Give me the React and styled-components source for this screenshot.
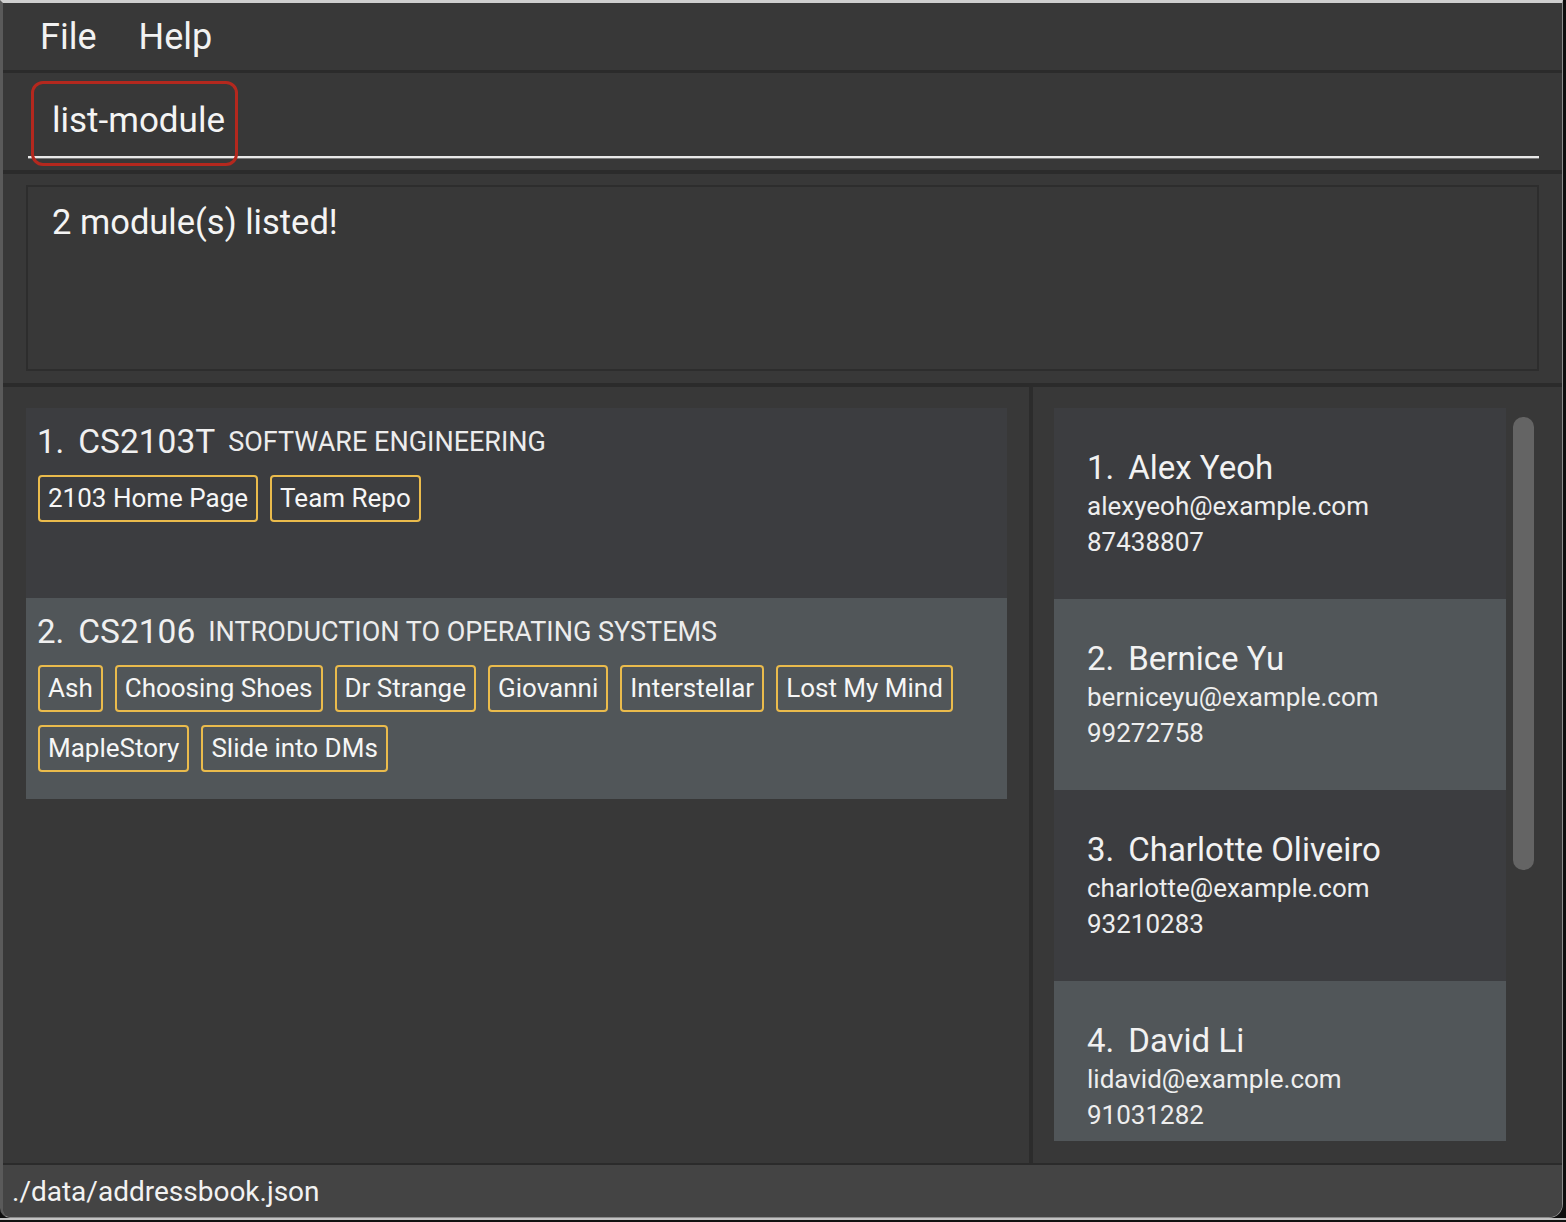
import React from "react";
import styled, { createGlobalStyle } from "styled-components";

const GlobalStyle = createGlobalStyle`
  html, body {
    margin: 0;
    padding: 0;
    background: #101010;
    overflow: hidden;
  }
  * { box-sizing: border-box; }
`;

const Frame = styled.div`
  width: 1566px;
  height: 1222px;
  background: #0e0e0e;
  font-family: Roboto, "Liberation Sans", sans-serif;
  color: #f0f0f0;
`;

const Window = styled.div`
  width: 1563px;
  height: 1218px;
  border-left: 3px solid #5a5a5a;
  border-top: 3px solid #cfcfcf;
  border-right: 1px solid #8c8c8c;
  border-bottom: 1px solid #8c8c8c;
  border-bottom-right-radius: 14px;
  border-bottom-left-radius: 10px;
  overflow: hidden;
  display: flex;
  flex-direction: column;
  background: #383838;
`;

const BottomEdge = styled.div`
  height: 4px;
  border-top: 2px solid #c2c2c2;
  background: #111;
`;

const Separator = styled.div`
  flex: 0 0 ${(p) => p.$h}px;
  background: #2b2b2b;
`;

const MenuBar = styled.div`
  flex: 0 0 67px;
  display: flex;
  align-items: center;
  padding-left: 16px;
  background: #383838;
`;

const MenuItem = styled.div`
  padding: 0 21px;
  font-size: 36px;
  color: #f2f2f2;
`;

const CommandBox = styled.div`
  position: relative;
  flex: 0 0 97px;
  display: flex;
  align-items: flex-end;
  padding: 0 23px 12px 25px;
  background: #383838;
`;

const CommandInput = styled.div`
  flex: 1;
  height: 72px;
  line-height: 70px;
  padding-left: 24px;
  font-size: 35px;
  color: #f4f4f4;
  border-bottom: 2px solid #e9e9e9;
  box-shadow: 0 1px 0 #7a7a7a;
`;

const Highlight = styled.div`
  position: absolute;
  left: 28px;
  top: 8px;
  width: 207px;
  height: 85px;
  border: 3px solid #b4281e;
  border-radius: 12px;
  pointer-events: none;
`;

const ResultSection = styled.div`
  flex: 0 0 209px;
  padding: 11px 23px 12px 23px;
  background: #383838;
  display: flex;
`;

const ResultBox = styled.div`
  flex: 1;
  border: 2px solid #2d2d2d;
  padding: 13px 24px;
  font-size: 34.5px;
  line-height: 44px;
  color: #f4f4f4;
`;

const Main = styled.div`
  flex: 0 0 776px;
  min-height: 0;
  overflow: hidden;
  display: flex;
  background: #383838;
`;

const ModulePanel = styled.div`
  flex: 0 0 1026px;
  min-height: 0;
  padding: 21px 22px 0 23px;
  display: flex;
  flex-direction: column;
`;

const VDivider = styled.div`
  flex: 0 0 4px;
  background: #2c2c2c;
`;

const PersonPanel = styled.div`
  flex: 1;
  min-height: 0;
  padding: 21px 21px 22px 21px;
  display: flex;
`;

const PersonViewport = styled.div`
  position: relative;
  flex: 1;
  min-height: 0;
  overflow: hidden;
  display: flex;
  align-items: flex-start;
`;

const PersonColumn = styled.div`
  flex: 0 0 452px;
  display: flex;
  flex-direction: column;
`;

const ScrollThumb = styled.div`
  position: absolute;
  left: 459px;
  top: 9px;
  width: 21px;
  height: 453px;
  border-radius: 10px;
  background: #646464;
`;

const Card = styled.div`
  background: ${(p) => (p.$alt ? "#515659" : "#3c3d40")};
`;

const ModuleCard = styled(Card)`
  min-height: 190px;
  padding: 14px 12px 27px 11px;
  display: flex;
  flex-direction: column;
  gap: 13px;
`;

const ModuleTitle = styled.div`
  display: flex;
  align-items: center;
  height: 40px;
  line-height: 40px;
`;

const Index = styled.span`
  font-size: 33px;
  color: #f0f0f0;
  margin-right: ${(p) => p.$gap}px;
`;

const ModuleCode = styled.span`
  font-size: 33.5px;
  color: #f0f0f0;
  margin-right: 13px;
`;

const ModuleName = styled.span`
  font-size: 27px;
  color: #ececec;
`;

const Tags = styled.div`
  display: flex;
  flex-wrap: wrap;
  gap: 13px 12px;
  padding-left: 1px;
`;

const Tag = styled.span`
  display: inline-block;
  height: 47px;
  line-height: 33px;
  padding: 5px 8px;
  font-size: 26px;
  color: #f6f6f6;
  border: 2px solid #eabb4c;
  border-radius: 4px;
`;

const PersonCard = styled(Card)`
  flex: 0 0 191px;
  display: flex;
  flex-direction: column;
  justify-content: center;
  padding-left: 33px;
`;

const PersonName = styled.div`
  font-size: 33px;
  line-height: 40px;
  color: #f2f2f2;
  display: flex;
`;

const PersonLine = styled.div`
  font-size: 26px;
  line-height: 36px;
  color: #eeeeee;
`;

const StatusBar = styled.div`
  flex: 0 0 52px;
  display: flex;
  align-items: center;
  padding-left: 9px;
  font-size: 28px;
  color: #f2f2f2;
  background: #444444;
`;

const modules = [
  {
    code: "CS2103T",
    name: "SOFTWARE ENGINEERING",
    tags: ["2103 Home Page", "Team Repo"],
  },
  {
    code: "CS2106",
    name: "INTRODUCTION TO OPERATING SYSTEMS",
    tags: [
      "Ash",
      "Choosing Shoes",
      "Dr Strange",
      "Giovanni",
      "Interstellar",
      "Lost My Mind",
      "MapleStory",
      "Slide into DMs",
    ],
  },
];

const persons = [
  { name: "Alex Yeoh", email: "alexyeoh@example.com", phone: "87438807" },
  { name: "Bernice Yu", email: "berniceyu@example.com", phone: "99272758" },
  { name: "Charlotte Oliveiro", email: "charlotte@example.com", phone: "93210283" },
  { name: "David Li", email: "lidavid@example.com", phone: "91031282" },
];

export default function App() {
  return (
    <Frame>
      <GlobalStyle />
      <Window>
        <MenuBar>
          <MenuItem>File</MenuItem>
          <MenuItem>Help</MenuItem>
        </MenuBar>
        <Separator $h={3} />
        <CommandBox>
          <CommandInput>list-module</CommandInput>
          <Highlight />
        </CommandBox>
        <Separator $h={4} />
        <ResultSection>
          <ResultBox>2 module(s) listed!</ResultBox>
        </ResultSection>
        <Separator $h={4} />
        <Main>
          <ModulePanel>
            {modules.map((m, i) => (
              <ModuleCard key={m.code} $alt={i % 2 === 1}>
                <ModuleTitle>
                  <Index $gap={14}>{i + 1}.</Index>
                  <ModuleCode>{m.code}</ModuleCode>
                  <ModuleName>{m.name}</ModuleName>
                </ModuleTitle>
                <Tags>
                  {m.tags.map((t) => (
                    <Tag key={t}>{t}</Tag>
                  ))}
                </Tags>
              </ModuleCard>
            ))}
          </ModulePanel>
          <VDivider />
          <PersonPanel>
            <PersonViewport>
              <PersonColumn>
                {persons.map((p, i) => (
                  <PersonCard key={p.name} $alt={i % 2 === 1}>
                    <PersonName>
                      <Index $gap={14}>{i + 1}.</Index>
                      <span>{p.name}</span>
                    </PersonName>
                    <PersonLine>{p.email}</PersonLine>
                    <PersonLine>{p.phone}</PersonLine>
                  </PersonCard>
                ))}
              </PersonColumn>
              <ScrollThumb />
            </PersonViewport>
          </PersonPanel>
        </Main>
        <Separator $h={2} />
        <StatusBar>./data/addressbook.json</StatusBar>
      </Window>
      <BottomEdge />
    </Frame>
  );
}
